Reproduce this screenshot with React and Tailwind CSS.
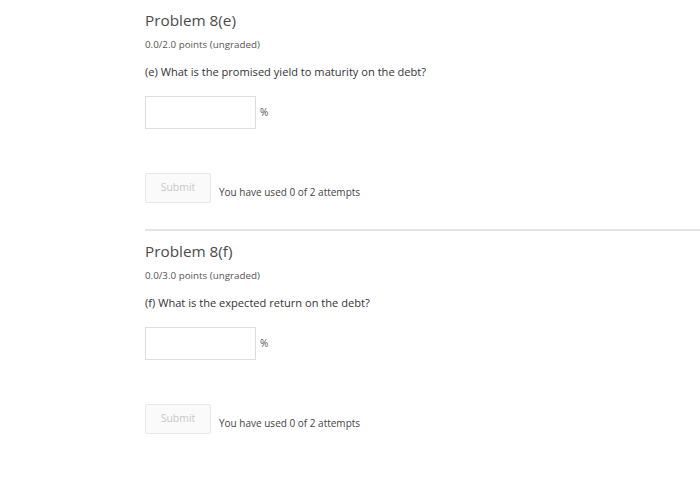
function Problem({ title, points, question }) {
    return (
        <div className="pl-[145px]">
            <h2 className="text-[15.3px] leading-[20px] text-[#4a4a4a] pt-[10px]">{title}</h2>
            <p className="text-[9.8px] leading-[12px] text-[#555] mt-[9px]">{points}</p>
            <p className="text-[11.1px] leading-[14px] text-[#333] mt-[14px]">{question}</p>
            <div className="flex items-center mt-[17px]">
                <div className="w-[111px] h-[33px] border border-[#ddd] bg-white"></div>
                <span className="text-[10px] text-[#555] ml-[4px]">%</span>
            </div>
            <div className="flex items-end mt-[44px]">
                <button className="w-[66px] h-[30px] border border-[#e8e8e8] bg-[#fafafa] text-[10.5px] text-[#c8c8c8] rounded-[2px]">
                    Submit
                </button>
                <span className="text-[10px] text-[#444] ml-[8px] mb-[3px]">You have used 0 of 2 attempts</span>
            </div>
        </div>
    );
}

function App() {
    return (
        <div className="bg-white w-[700px] h-[478px] overflow-hidden" style={{ fontFamily: '"Open Sans", sans-serif' }}>
            <Problem
                title="Problem 8(e)"
                points="0.0/2.0 points (ungraded)"
                question="(e) What is the promised yield to maturity on the debt?"
            />
            <div className="ml-[145px] mt-[26px] border-t-2 border-[#e4e4e4]"></div>
            <Problem
                title="Problem 8(f)"
                points="0.0/3.0 points (ungraded)"
                question="(f) What is the expected return on the debt?"
            />
        </div>
    );
}

export default App;
